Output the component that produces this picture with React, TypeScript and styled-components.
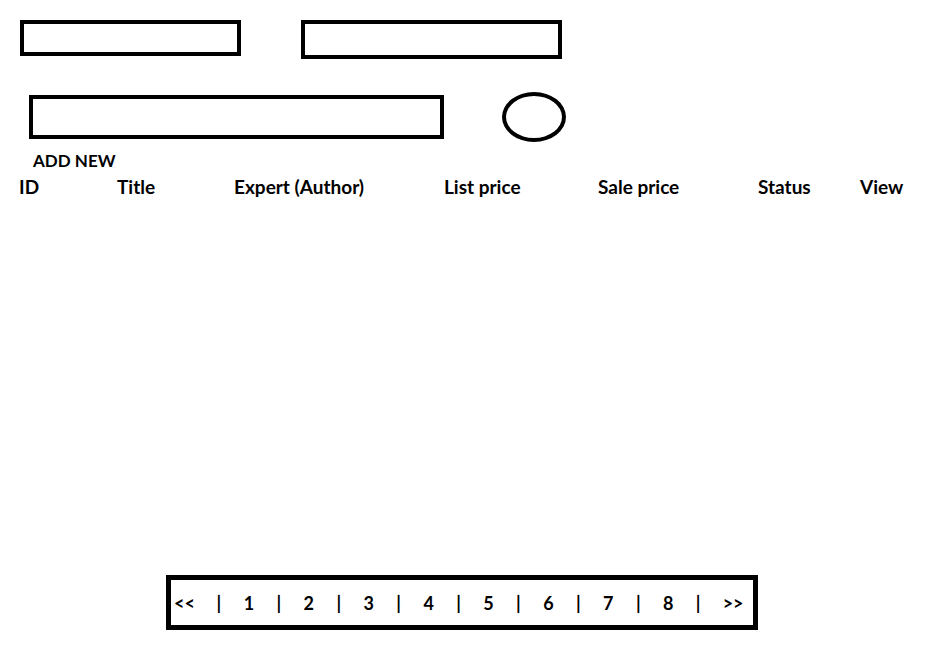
import React from "react";
import styled, { createGlobalStyle } from "styled-components";

const GlobalStyle = createGlobalStyle`
  body {
    margin: 0;
    background: #fff;
    font-family: Lato, "Liberation Sans", sans-serif;
    color: #000;
  }
`;

const Page = styled.div`
  width: 948px;
  height: 660px;
  padding-top: 20px;
  box-sizing: border-box;
`;

const TopRow = styled.div`
  display: flex;
  align-items: flex-start;
  padding-left: 20px;
  gap: 60px;
`;

const Field = styled.div<{ w: number; h: number }>`
  width: ${(p) => p.w}px;
  height: ${(p) => p.h}px;
  border: 4px solid #000;
  box-sizing: border-box;
`;

const SearchRow = styled.div`
  display: flex;
  align-items: center;
  padding-left: 29px;
  margin-top: 33px;
  gap: 58px;
`;

const SearchButton = styled.div`
  width: 64px;
  height: 50px;
  border: 4px solid #000;
  border-radius: 50%;
  box-sizing: border-box;
`;

const AddNew = styled.div`
  margin: 9px 0 0 33px;
  font-size: 17px;
  font-weight: 700;
  line-height: 20px;
`;

const HeaderRow = styled.div`
  display: grid;
  grid-template-columns: 98px 117px 210px 154px 160px 102px 88px;
  padding-left: 19px;
  margin-top: 6px;
  font-size: 19px;
  font-weight: 700;
  line-height: 20px;
`;

const TableBody = styled.div`
  height: 378px;
`;

const Pager = styled.div`
  display: flex;
  align-items: center;
  margin-left: 166px;
  width: 592px;
  height: 55px;
  border: 5px solid #000;
  box-sizing: border-box;
  font-size: 18px;
  font-weight: 700;
`;

const PagerCell = styled.span<{ w?: number; left?: boolean }>`
  width: ${(p) => p.w ?? 30}px;
  text-align: ${(p) => (p.left ? "left" : "center")};
  padding-left: ${(p) => (p.left ? 3 : 0)}px;
  box-sizing: border-box;
`;

const columns = ["ID", "Title", "Expert (Author)", "List price", "Sale price", "Status", "View"];
const pages = [1, 2, 3, 4, 5, 6, 7, 8];

export default function App() {
  return (
    <Page>
      <GlobalStyle />
      <TopRow>
        <Field w={221} h={36} />
        <Field w={261} h={39} />
      </TopRow>
      <SearchRow>
        <Field w={415} h={44} />
        <SearchButton />
      </SearchRow>
      <AddNew>ADD NEW</AddNew>
      <HeaderRow>
        {columns.map((c) => (
          <span key={c}>{c}</span>
        ))}
      </HeaderRow>
      <TableBody />
      <Pager>
        <PagerCell w={33} left>
          &lt;&lt;
        </PagerCell>
        {pages.map((n) => (
          <React.Fragment key={n}>
            <PagerCell>|</PagerCell>
            <PagerCell>{n}</PagerCell>
          </React.Fragment>
        ))}
        <PagerCell>|</PagerCell>
        <PagerCell w={40}>&gt;&gt;</PagerCell>
      </Pager>
    </Page>
  );
}
